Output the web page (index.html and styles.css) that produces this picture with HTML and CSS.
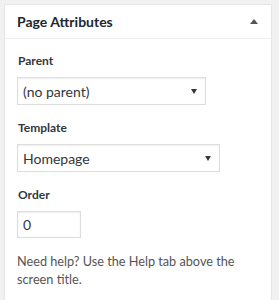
FILE: index.html
```html
<!DOCTYPE html>
<html>
<head>
<meta charset="utf-8">
<link rel="stylesheet" href="styles.css">
</head>
<body>
<div class="postbox">
  <div class="postbox-header">
    <h2 class="postbox-title">Page Attributes</h2>
    <span class="toggle-arrow"></span>
  </div>
  <div class="inside">
    <p class="field-label">Parent</p>
    <div class="select-wrap select-parent">
      <select class="select"><option>(no parent)</option></select>
    </div>
    <p class="field-label">Template</p>
    <div class="select-wrap select-template">
      <select class="select"><option>Homepage</option></select>
    </div>
    <p class="field-label">Order</p>
    <input class="order-input" type="text" value="0">
    <p class="help">Need help? Use the Help tab above the screen title.</p>
  </div>
</div>
</body>
</html>
```
FILE: styles.css
```css
html, body {
  margin: 0;
  padding: 0;
  background: #f1f1f1;
  font-family: Lato, "Liberation Sans", sans-serif;
}

.postbox {
  margin: 4px 0 0 4px;
  width: 268px;
  box-sizing: border-box;
  background: #fff;
  border: 1px solid #e5e5e5;
  box-shadow: 0 1px 1px rgba(0,0,0,0.04);
  min-height: 310px;
}

.postbox-header {
  height: 33px;
  border-bottom: 1px solid #eee;
  padding: 0 12px;
  display: flex;
  align-items: center;
  justify-content: space-between;
}

.postbox-title {
  margin: 0;
  font-size: 14px;
  font-weight: 700;
  color: #23282d;
}

.toggle-arrow {
  width: 0;
  height: 0;
  border-left: 4px solid transparent;
  border-right: 4px solid transparent;
  border-bottom: 5px solid #555;
  margin-right: 1px;
}

.inside {
  padding: 14px 12px 0 12px;
}

.field-label {
  margin: 0 0 8px 1px;
  font-size: 12px;
  line-height: 16px;
  font-weight: 700;
  color: #32373c;
}

.select-wrap {
  position: relative;
  height: 28px;
  margin-bottom: 15px;
}

.select-parent { width: 189px; }
.select-template { width: 203px; }

.select-wrap::after {
  content: "";
  position: absolute;
  right: 9px;
  top: 12px;
  border-left: 3px solid transparent;
  border-right: 3px solid transparent;
  border-top: 5px solid #32373c;
  pointer-events: none;
}

.select {
  -webkit-appearance: none;
  appearance: none;
  width: 100%;
  height: 28px;
  box-sizing: border-box;
  margin: 0;
  padding: 0 20px 0 5px;
  border: 1px solid #ddd;
  border-radius: 0;
  background: #fff;
  box-shadow: inset 0 1px 2px rgba(0,0,0,0.07);
  font-family: Lato, "Liberation Sans", sans-serif;
  font-size: 14px;
  color: #32373c;
}

.order-input {
  display: block;
  width: 64px;
  height: 27px;
  box-sizing: border-box;
  margin: 0;
  padding: 0 5px;
  border: 1px solid #ddd;
  box-shadow: inset 0 1px 2px rgba(0,0,0,0.07);
  font-family: Lato, "Liberation Sans", sans-serif;
  font-size: 14px;
  color: #32373c;
}

.help {
  margin: 14px 0 0 0;
  font-size: 12.7px;
  line-height: 18px;
  color: #555;
}
```
